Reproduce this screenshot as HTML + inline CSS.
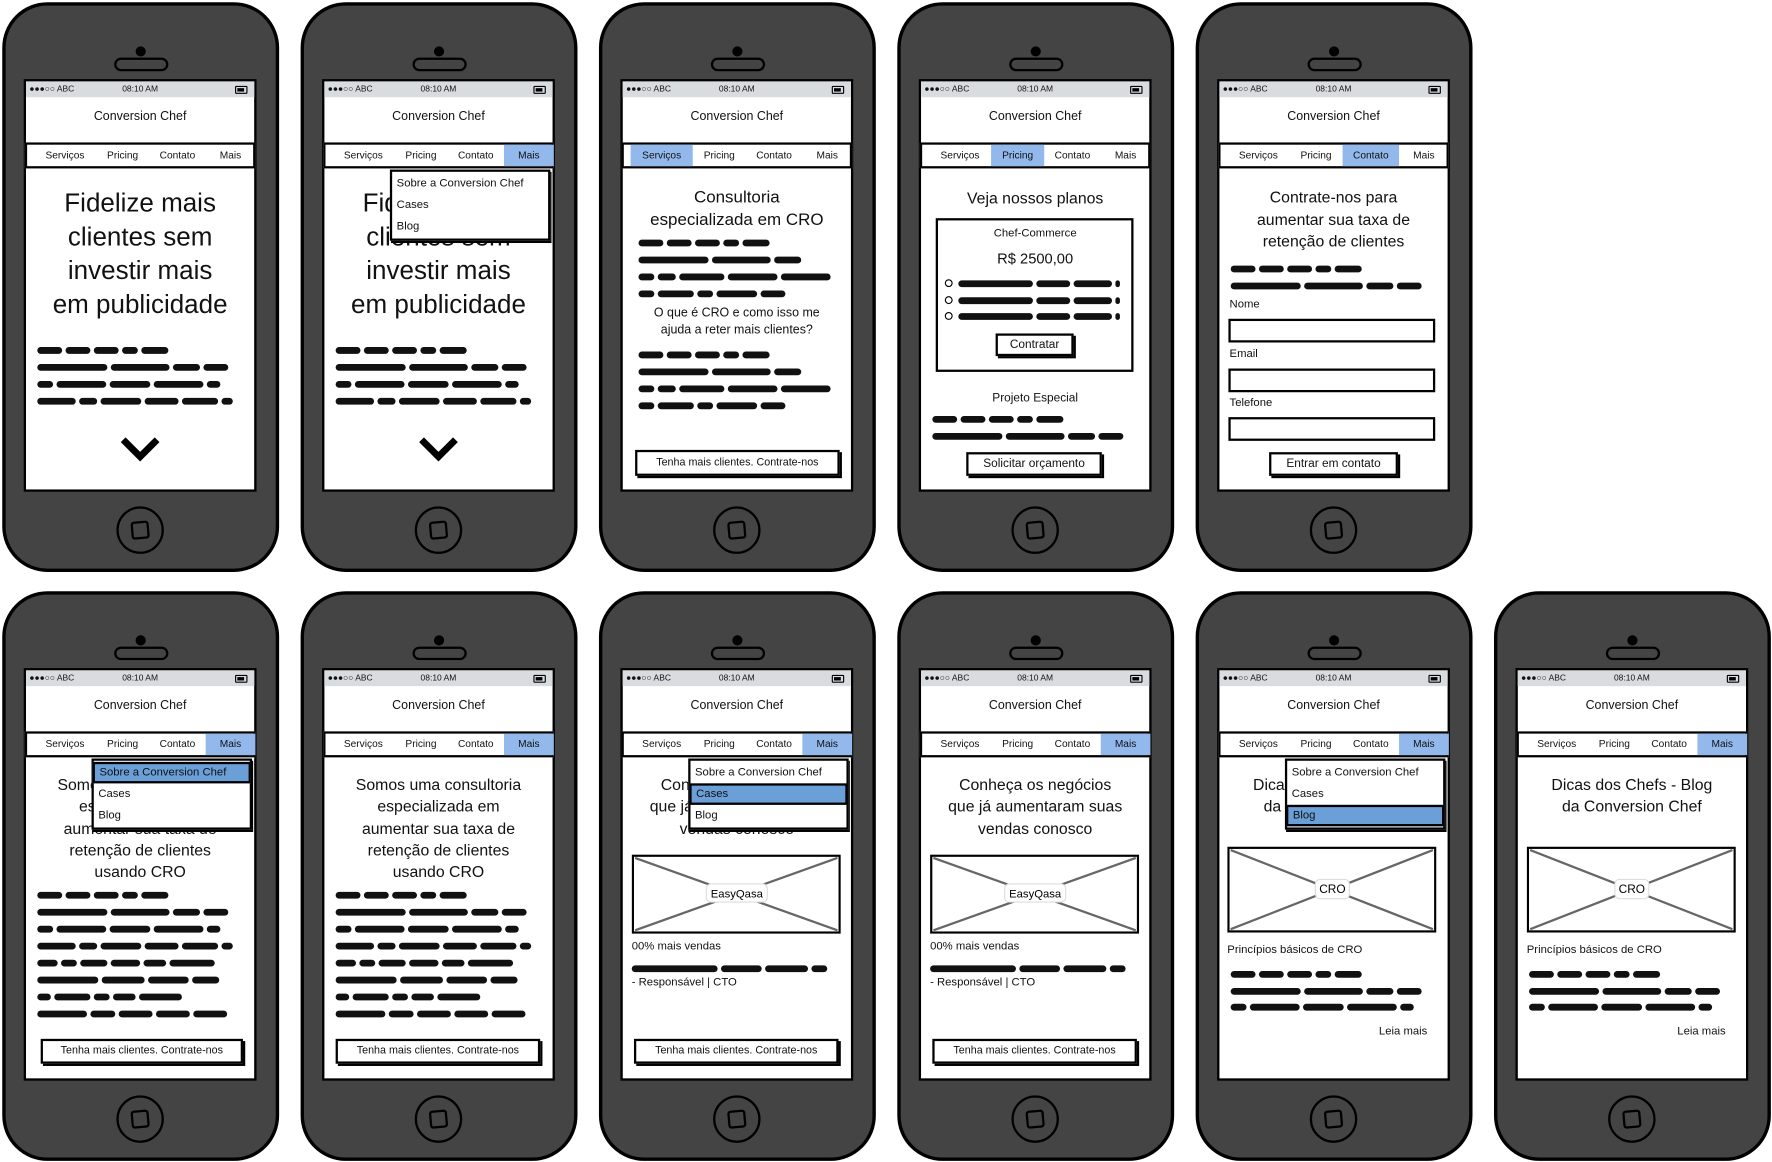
<!DOCTYPE html>
<html><head><meta charset="utf-8"><style>
html,body{margin:0;padding:0;background:#fff;width:1772px;height:1162px;overflow:hidden}
#w{position:absolute;left:0;top:0;width:1568px;height:1028px;transform:scale(1.1301,1.1304);transform-origin:0 0;font-family:"Liberation Sans",sans-serif;color:#111}
.ph{position:absolute;width:245px;height:504px;background:#444;border:3px solid #000;border-radius:40px;box-sizing:border-box}
.dot{position:absolute;left:115px;top:36px;width:9px;height:9px;border-radius:50%;background:#000}
.pill{position:absolute;left:96px;top:46px;width:44px;height:8px;border:2px solid #000;border-radius:8px}
.home{position:absolute;left:98px;top:443px;width:38px;height:38px;border:2px solid #000;border-radius:50%}
.home i{position:absolute;left:11px;top:11px;width:12px;height:12px;border:2px solid #000;border-radius:3px;transform:rotate(-5deg)}
.sc{position:absolute;left:18px;top:67px;width:202px;height:361px;background:#fff;outline:2px solid #000}
.sb{position:absolute;left:0;top:0;width:202px;height:14px;background:#d8dcdf;font-size:7.5px;line-height:14px}
.sb .l{position:absolute;left:3px}.sb .c{position:absolute;left:0;width:202px;text-align:center}
.sb .b{position:absolute;right:6px;top:4px;width:9px;height:5px;border:1px solid #000;border-radius:1px}
.sb .b:after{content:"";position:absolute;left:1px;top:1px;width:6px;height:3px;background:#000}
.tt{position:absolute;left:0;top:25px;width:202px;text-align:center;font-size:11px}
.nv{position:absolute;left:-1px;top:54px;width:204px;height:23px;border:2px solid #000;box-sizing:border-box;background:#fff}
.nv div{position:absolute;top:0;height:19px;line-height:19px;font-size:9px;text-align:center}
.on{background:#92b8ec}
.n1{left:6px;width:55px}.n2{left:61px;width:47px}.n3{left:108px;width:50px}.n4{left:158px;width:44px}
.h{position:absolute;left:0;width:202px;text-align:center}
.s{position:absolute;height:6px;display:flex;gap:3px}
.s span{display:block;height:6px;background:#111;border-radius:3px}
.bt{position:absolute;border:2px solid #000;box-shadow:2px 2px 0 #000;background:#fff;text-align:center;box-sizing:border-box;font-size:9.5px}
.dd{position:absolute;left:58px;top:78px;width:142px;height:63px;border:2px solid #000;background:#fff;box-sizing:border-box;box-shadow:1px 2px 0 #000}
.dd div{position:absolute;left:-1px;width:140px;height:19px;line-height:19px;font-size:10px;padding-left:5px;box-sizing:border-box}
.dd .hi{background:#6a9fd8;border:2px solid #000;line-height:15px;padding-left:4px}
.lab{position:absolute;font-size:10px}
.in{position:absolute;left:8px;width:183px;height:21px;border:2px solid #000;box-sizing:border-box}
</style></head><body><div id="w">

<!-- ROW 1 -->
<div class="ph" style="left:2px;top:2px"><div class="dot"></div><div class="pill"></div><div class="home"><i></i></div>
<div class="sc"><div class="sb"><span class="l">●●●○○ ABC</span><span class="c">08:10 AM</span><span class="b"></span></div>
<div class="tt">Conversion Chef</div>
<div class="nv"><div class="n1">Serviços</div><div class="n2">Pricing</div><div class="n3">Contato</div><div class="n4">Mais</div></div>
<div class="h" style="top:92px;font-size:23px;line-height:30px">Fidelize mais<br>clientes sem<br>investir mais<br>em publicidade</div>
<div class="s" style="left:10px;top:235px"><span style="width:22px"></span><span style="width:22px"></span><span style="width:22px"></span><span style="width:14px"></span><span style="width:24px"></span></div>
<div class="s" style="left:10px;top:250px"><span style="width:62px"></span><span style="width:52px"></span><span style="width:24px"></span><span style="width:22px"></span></div>
<div class="s" style="left:10px;top:265px"><span style="width:14px"></span><span style="width:44px"></span><span style="width:36px"></span><span style="width:44px"></span><span style="width:12px"></span></div>
<div class="s" style="left:10px;top:280px"><span style="width:34px"></span><span style="width:16px"></span><span style="width:36px"></span><span style="width:30px"></span><span style="width:32px"></span><span style="width:10px"></span></div>
<svg style="position:absolute;left:82px;top:313px" width="38" height="26"><polyline points="4,4 19,19 34,4" fill="none" stroke="#000" stroke-width="6"/></svg>
</div></div>

<div class="ph" style="left:266px;top:2px"><div class="dot"></div><div class="pill"></div><div class="home"><i></i></div>
<div class="sc"><div class="sb"><span class="l">●●●○○ ABC</span><span class="c">08:10 AM</span><span class="b"></span></div>
<div class="tt">Conversion Chef</div>
<div class="nv"><div class="n1">Serviços</div><div class="n2">Pricing</div><div class="n3">Contato</div><div class="n4 on">Mais</div></div>
<div class="h" style="top:92px;font-size:23px;line-height:30px">Fidelize mais<br>clientes sem<br>investir mais<br>em publicidade</div>
<div class="s" style="left:10px;top:235px"><span style="width:22px"></span><span style="width:22px"></span><span style="width:22px"></span><span style="width:14px"></span><span style="width:24px"></span></div>
<div class="s" style="left:10px;top:250px"><span style="width:62px"></span><span style="width:52px"></span><span style="width:24px"></span><span style="width:22px"></span></div>
<div class="s" style="left:10px;top:265px"><span style="width:14px"></span><span style="width:44px"></span><span style="width:36px"></span><span style="width:44px"></span><span style="width:12px"></span></div>
<div class="s" style="left:10px;top:280px"><span style="width:34px"></span><span style="width:16px"></span><span style="width:36px"></span><span style="width:30px"></span><span style="width:32px"></span><span style="width:10px"></span></div>
<svg style="position:absolute;left:82px;top:313px" width="38" height="26"><polyline points="4,4 19,19 34,4" fill="none" stroke="#000" stroke-width="6"/></svg>
<div class="dd"><div style="top:1px">Sobre a Conversion Chef</div><div style="top:20px">Cases</div><div style="top:39px">Blog</div></div>
</div></div>

<div class="ph" style="left:530px;top:2px"><div class="dot"></div><div class="pill"></div><div class="home"><i></i></div>
<div class="sc"><div class="sb"><span class="l">●●●○○ ABC</span><span class="c">08:10 AM</span><span class="b"></span></div>
<div class="tt">Conversion Chef</div>
<div class="nv"><div class="n1 on">Serviços</div><div class="n2">Pricing</div><div class="n3">Contato</div><div class="n4">Mais</div></div>
<div class="h" style="top:93px;font-size:15px;line-height:19.5px">Consultoria<br>especializada em CRO</div>
<div class="s" style="left:14px;top:140px"><span style="width:22px"></span><span style="width:22px"></span><span style="width:22px"></span><span style="width:14px"></span><span style="width:24px"></span></div>
<div class="s" style="left:14px;top:155px"><span style="width:62px"></span><span style="width:52px"></span><span style="width:24px"></span></div>
<div class="s" style="left:14px;top:170px"><span style="width:14px"></span><span style="width:16px"></span><span style="width:40px"></span><span style="width:44px"></span><span style="width:44px"></span></div>
<div class="s" style="left:14px;top:185px"><span style="width:14px"></span><span style="width:32px"></span><span style="width:14px"></span><span style="width:36px"></span><span style="width:22px"></span></div>
<div class="h" style="top:198px;font-size:11px;line-height:15px">O que é CRO e como isso me<br>ajuda a reter mais clientes?</div>
<div class="s" style="left:14px;top:239px"><span style="width:22px"></span><span style="width:22px"></span><span style="width:22px"></span><span style="width:14px"></span><span style="width:24px"></span></div>
<div class="s" style="left:14px;top:254px"><span style="width:62px"></span><span style="width:52px"></span><span style="width:24px"></span></div>
<div class="s" style="left:14px;top:269px"><span style="width:14px"></span><span style="width:16px"></span><span style="width:40px"></span><span style="width:44px"></span><span style="width:44px"></span></div>
<div class="s" style="left:14px;top:284px"><span style="width:14px"></span><span style="width:32px"></span><span style="width:14px"></span><span style="width:36px"></span><span style="width:22px"></span></div>
<div class="bt" style="left:11px;top:326px;width:181px;height:23px;line-height:19px">Tenha mais clientes. Contrate-nos</div>
</div></div>

<div class="ph" style="left:794px;top:2px"><div class="dot"></div><div class="pill"></div><div class="home"><i></i></div>
<div class="sc"><div class="sb"><span class="l">●●●○○ ABC</span><span class="c">08:10 AM</span><span class="b"></span></div>
<div class="tt">Conversion Chef</div>
<div class="nv"><div class="n1">Serviços</div><div class="n2 on">Pricing</div><div class="n3">Contato</div><div class="n4">Mais</div></div>
<div class="h" style="top:94px;font-size:14px;line-height:18px">Veja nossos planos</div>
<div style="position:absolute;left:13px;top:121px;width:175px;height:136px;border:2px solid #000;box-sizing:border-box"></div>
<div class="h" style="top:128px;font-size:10px;line-height:14px">Chef-Commerce</div>
<div class="h" style="top:149px;font-size:13px;line-height:16px">R$ 2500,00</div>
<div style="position:absolute;left:21px;top:175px;width:5px;height:5px;border:1.5px solid #000;border-radius:50%"></div>
<div style="position:absolute;left:21px;top:190px;width:5px;height:5px;border:1.5px solid #000;border-radius:50%"></div>
<div style="position:absolute;left:21px;top:204px;width:5px;height:5px;border:1.5px solid #000;border-radius:50%"></div>
<div class="s" style="left:33px;top:176px"><span style="width:66px"></span><span style="width:30px"></span><span style="width:34px"></span><span style="width:4px"></span></div>
<div class="s" style="left:33px;top:191px"><span style="width:66px"></span><span style="width:30px"></span><span style="width:34px"></span><span style="width:4px"></span></div>
<div class="s" style="left:33px;top:205px"><span style="width:66px"></span><span style="width:30px"></span><span style="width:34px"></span><span style="width:4px"></span></div>
<div class="bt" style="left:66px;top:223px;width:69px;height:20px;line-height:16px;font-size:10.5px">Contratar</div>
<div class="h" style="top:273px;font-size:10.5px;line-height:14px">Projeto Especial</div>
<div class="s" style="left:10px;top:296px"><span style="width:22px"></span><span style="width:22px"></span><span style="width:22px"></span><span style="width:14px"></span><span style="width:24px"></span></div>
<div class="s" style="left:10px;top:311px"><span style="width:62px"></span><span style="width:52px"></span><span style="width:24px"></span><span style="width:22px"></span></div>
<div class="bt" style="left:40px;top:328px;width:120px;height:21px;line-height:17px;font-size:10.5px">Solicitar orçamento</div>
</div></div>

<div class="ph" style="left:1058px;top:2px"><div class="dot"></div><div class="pill"></div><div class="home"><i></i></div>
<div class="sc"><div class="sb"><span class="l">●●●○○ ABC</span><span class="c">08:10 AM</span><span class="b"></span></div>
<div class="tt">Conversion Chef</div>
<div class="nv"><div class="n1">Serviços</div><div class="n2">Pricing</div><div class="n3 on">Contato</div><div class="n4">Mais</div></div>
<div class="h" style="top:93px;font-size:14px;line-height:19.5px">Contrate-nos para<br>aumentar sua taxa de<br>retenção de clientes</div>
<div class="s" style="left:10px;top:163px"><span style="width:22px"></span><span style="width:22px"></span><span style="width:22px"></span><span style="width:14px"></span><span style="width:24px"></span></div>
<div class="s" style="left:10px;top:178px"><span style="width:62px"></span><span style="width:52px"></span><span style="width:24px"></span><span style="width:22px"></span></div>
<div class="lab" style="left:9px;top:192px">Nome</div><div class="in" style="top:210px"></div>
<div class="lab" style="left:9px;top:236px">Email</div><div class="in" style="top:254px"></div>
<div class="lab" style="left:9px;top:279px">Telefone</div><div class="in" style="top:297px"></div>
<div class="bt" style="left:44px;top:328px;width:114px;height:21px;line-height:17px;font-size:10.5px">Entrar em contato</div>
</div></div>

<!-- ROW 2 -->
<div class="ph" style="left:2px;top:523px"><div class="dot"></div><div class="pill"></div><div class="home"><i></i></div>
<div class="sc"><div class="sb"><span class="l">●●●○○ ABC</span><span class="c">08:10 AM</span><span class="b"></span></div>
<div class="tt">Conversion Chef</div>
<div class="nv"><div class="n1">Serviços</div><div class="n2">Pricing</div><div class="n3">Contato</div><div class="n4 on">Mais</div></div>
<div class="h" style="top:92px;font-size:14px;line-height:19.3px">Somos uma consultoria<br>especializada em<br>aumentar sua taxa de<br>retenção de clientes<br>usando CRO</div>
<div class="s" style="left:10px;top:196px"><span style="width:22px"></span><span style="width:22px"></span><span style="width:22px"></span><span style="width:14px"></span><span style="width:24px"></span></div>
<div class="s" style="left:10px;top:211px"><span style="width:62px"></span><span style="width:52px"></span><span style="width:24px"></span><span style="width:22px"></span></div>
<div class="s" style="left:10px;top:226px"><span style="width:14px"></span><span style="width:44px"></span><span style="width:36px"></span><span style="width:44px"></span><span style="width:12px"></span></div>
<div class="s" style="left:10px;top:241px"><span style="width:34px"></span><span style="width:16px"></span><span style="width:36px"></span><span style="width:30px"></span><span style="width:32px"></span><span style="width:10px"></span></div>
<div class="s" style="left:10px;top:256px"><span style="width:18px"></span><span style="width:14px"></span><span style="width:24px"></span><span style="width:26px"></span><span style="width:20px"></span><span style="width:40px"></span></div>
<div class="s" style="left:10px;top:271px"><span style="width:54px"></span><span style="width:38px"></span><span style="width:36px"></span><span style="width:24px"></span></div>
<div class="s" style="left:10px;top:286px"><span style="width:12px"></span><span style="width:32px"></span><span style="width:14px"></span><span style="width:20px"></span><span style="width:38px"></span></div>
<div class="s" style="left:10px;top:301px"><span style="width:44px"></span><span style="width:22px"></span><span style="width:30px"></span><span style="width:30px"></span><span style="width:30px"></span></div>
<div class="bt" style="left:13px;top:326px;width:179px;height:22px;line-height:18px">Tenha mais clientes. Contrate-nos</div>
<div class="dd"><div class="hi" style="top:1px">Sobre a Conversion Chef</div><div style="top:20px">Cases</div><div style="top:39px">Blog</div></div>
</div></div>

<div class="ph" style="left:266px;top:523px"><div class="dot"></div><div class="pill"></div><div class="home"><i></i></div>
<div class="sc"><div class="sb"><span class="l">●●●○○ ABC</span><span class="c">08:10 AM</span><span class="b"></span></div>
<div class="tt">Conversion Chef</div>
<div class="nv"><div class="n1">Serviços</div><div class="n2">Pricing</div><div class="n3">Contato</div><div class="n4 on">Mais</div></div>
<div class="h" style="top:92px;font-size:14px;line-height:19.3px">Somos uma consultoria<br>especializada em<br>aumentar sua taxa de<br>retenção de clientes<br>usando CRO</div>
<div class="s" style="left:10px;top:196px"><span style="width:22px"></span><span style="width:22px"></span><span style="width:22px"></span><span style="width:14px"></span><span style="width:24px"></span></div>
<div class="s" style="left:10px;top:211px"><span style="width:62px"></span><span style="width:52px"></span><span style="width:24px"></span><span style="width:22px"></span></div>
<div class="s" style="left:10px;top:226px"><span style="width:14px"></span><span style="width:44px"></span><span style="width:36px"></span><span style="width:44px"></span><span style="width:12px"></span></div>
<div class="s" style="left:10px;top:241px"><span style="width:34px"></span><span style="width:16px"></span><span style="width:36px"></span><span style="width:30px"></span><span style="width:32px"></span><span style="width:10px"></span></div>
<div class="s" style="left:10px;top:256px"><span style="width:18px"></span><span style="width:14px"></span><span style="width:24px"></span><span style="width:26px"></span><span style="width:20px"></span><span style="width:40px"></span></div>
<div class="s" style="left:10px;top:271px"><span style="width:54px"></span><span style="width:38px"></span><span style="width:36px"></span><span style="width:24px"></span></div>
<div class="s" style="left:10px;top:286px"><span style="width:12px"></span><span style="width:32px"></span><span style="width:14px"></span><span style="width:20px"></span><span style="width:38px"></span></div>
<div class="s" style="left:10px;top:301px"><span style="width:44px"></span><span style="width:22px"></span><span style="width:30px"></span><span style="width:30px"></span><span style="width:30px"></span></div>
<div class="bt" style="left:10px;top:326px;width:181px;height:22px;line-height:18px">Tenha mais clientes. Contrate-nos</div>
</div></div>

<div class="ph" style="left:530px;top:523px"><div class="dot"></div><div class="pill"></div><div class="home"><i></i></div>
<div class="sc"><div class="sb"><span class="l">●●●○○ ABC</span><span class="c">08:10 AM</span><span class="b"></span></div>
<div class="tt">Conversion Chef</div>
<div class="nv"><div class="n1">Serviços</div><div class="n2">Pricing</div><div class="n3">Contato</div><div class="n4 on">Mais</div></div>
<div class="h" style="top:92px;font-size:14px;line-height:19.3px">Conheça os negócios<br>que já aumentaram suas<br>vendas conosco</div>
<svg style="position:absolute;left:8px;top:163px" width="185" height="70"><rect x="1" y="1" width="183" height="68" fill="#fff" stroke="#000" stroke-width="2"/><line x1="3" y1="3" x2="182" y2="67" stroke="#666" stroke-width="2"/><line x1="182" y1="3" x2="3" y2="67" stroke="#666" stroke-width="2"/><rect x="66" y="26" width="54" height="16" rx="4" fill="#fff" stroke="#ddd"/><text x="93" y="38" font-size="10" text-anchor="middle" font-family="Liberation Sans">EasyQasa</text></svg>
<div class="lab" style="left:8px;top:239px">00% mais vendas</div>
<div class="s" style="left:8px;top:261px"><span style="width:76px"></span><span style="width:36px"></span><span style="width:38px"></span><span style="width:14px"></span></div>
<div class="lab" style="left:8px;top:271px">- Responsável | CTO</div>
<div class="bt" style="left:10px;top:326px;width:181px;height:22px;line-height:18px">Tenha mais clientes. Contrate-nos</div>
<div class="dd"><div style="top:1px">Sobre a Conversion Chef</div><div class="hi" style="top:20px">Cases</div><div style="top:39px">Blog</div></div>
</div></div>

<div class="ph" style="left:794px;top:523px"><div class="dot"></div><div class="pill"></div><div class="home"><i></i></div>
<div class="sc"><div class="sb"><span class="l">●●●○○ ABC</span><span class="c">08:10 AM</span><span class="b"></span></div>
<div class="tt">Conversion Chef</div>
<div class="nv"><div class="n1">Serviços</div><div class="n2">Pricing</div><div class="n3">Contato</div><div class="n4 on">Mais</div></div>
<div class="h" style="top:92px;font-size:14px;line-height:19.3px">Conheça os negócios<br>que já aumentaram suas<br>vendas conosco</div>
<svg style="position:absolute;left:8px;top:163px" width="185" height="70"><rect x="1" y="1" width="183" height="68" fill="#fff" stroke="#000" stroke-width="2"/><line x1="3" y1="3" x2="182" y2="67" stroke="#666" stroke-width="2"/><line x1="182" y1="3" x2="3" y2="67" stroke="#666" stroke-width="2"/><rect x="66" y="26" width="54" height="16" rx="4" fill="#fff" stroke="#ddd"/><text x="93" y="38" font-size="10" text-anchor="middle" font-family="Liberation Sans">EasyQasa</text></svg>
<div class="lab" style="left:8px;top:239px">00% mais vendas</div>
<div class="s" style="left:8px;top:261px"><span style="width:76px"></span><span style="width:36px"></span><span style="width:38px"></span><span style="width:14px"></span></div>
<div class="lab" style="left:8px;top:271px">- Responsável | CTO</div>
<div class="bt" style="left:10px;top:326px;width:181px;height:22px;line-height:18px">Tenha mais clientes. Contrate-nos</div>
</div></div>

<div class="ph" style="left:1058px;top:523px"><div class="dot"></div><div class="pill"></div><div class="home"><i></i></div>
<div class="sc"><div class="sb"><span class="l">●●●○○ ABC</span><span class="c">08:10 AM</span><span class="b"></span></div>
<div class="tt">Conversion Chef</div>
<div class="nv"><div class="n1">Serviços</div><div class="n2">Pricing</div><div class="n3">Contato</div><div class="n4 on">Mais</div></div>
<div class="h" style="top:92px;font-size:14px;line-height:19.3px">Dicas dos Chefs - Blog<br>da Conversion Chef</div>
<svg style="position:absolute;left:7px;top:156px" width="185" height="76"><rect x="1" y="1" width="183" height="74" fill="#fff" stroke="#000" stroke-width="2"/><line x1="3" y1="3" x2="182" y2="73" stroke="#666" stroke-width="2"/><line x1="182" y1="3" x2="3" y2="73" stroke="#666" stroke-width="2"/><rect x="78" y="29" width="30" height="17" rx="4" fill="#fff" stroke="#ddd"/><text x="93" y="41" font-size="10.5" text-anchor="middle" font-family="Liberation Sans">CRO</text></svg>
<div class="lab" style="left:7px;top:242px">Princípios básicos de CRO</div>
<div class="s" style="left:10px;top:266px"><span style="width:22px"></span><span style="width:22px"></span><span style="width:22px"></span><span style="width:14px"></span><span style="width:24px"></span></div>
<div class="s" style="left:10px;top:281px"><span style="width:62px"></span><span style="width:52px"></span><span style="width:24px"></span><span style="width:22px"></span></div>
<div class="s" style="left:10px;top:295px"><span style="width:14px"></span><span style="width:44px"></span><span style="width:36px"></span><span style="width:44px"></span><span style="width:12px"></span></div>
<div class="lab" style="right:18px;top:314px">Leia mais</div>
<div class="dd"><div style="top:1px">Sobre a Conversion Chef</div><div style="top:20px">Cases</div><div class="hi" style="top:39px">Blog</div></div>
</div></div>

<div class="ph" style="left:1322px;top:523px"><div class="dot"></div><div class="pill"></div><div class="home"><i></i></div>
<div class="sc"><div class="sb"><span class="l">●●●○○ ABC</span><span class="c">08:10 AM</span><span class="b"></span></div>
<div class="tt">Conversion Chef</div>
<div class="nv"><div class="n1">Serviços</div><div class="n2">Pricing</div><div class="n3">Contato</div><div class="n4 on">Mais</div></div>
<div class="h" style="top:92px;font-size:14px;line-height:19.3px">Dicas dos Chefs - Blog<br>da Conversion Chef</div>
<svg style="position:absolute;left:8px;top:156px" width="185" height="76"><rect x="1" y="1" width="183" height="74" fill="#fff" stroke="#000" stroke-width="2"/><line x1="3" y1="3" x2="182" y2="73" stroke="#666" stroke-width="2"/><line x1="182" y1="3" x2="3" y2="73" stroke="#666" stroke-width="2"/><rect x="78" y="29" width="30" height="17" rx="4" fill="#fff" stroke="#ddd"/><text x="93" y="41" font-size="10.5" text-anchor="middle" font-family="Liberation Sans">CRO</text></svg>
<div class="lab" style="left:8px;top:242px">Princípios básicos de CRO</div>
<div class="s" style="left:10px;top:266px"><span style="width:22px"></span><span style="width:22px"></span><span style="width:22px"></span><span style="width:14px"></span><span style="width:24px"></span></div>
<div class="s" style="left:10px;top:281px"><span style="width:62px"></span><span style="width:52px"></span><span style="width:24px"></span><span style="width:22px"></span></div>
<div class="s" style="left:10px;top:295px"><span style="width:14px"></span><span style="width:44px"></span><span style="width:36px"></span><span style="width:44px"></span><span style="width:12px"></span></div>
<div class="lab" style="right:18px;top:314px">Leia mais</div>
</div></div>

</div></body></html>
